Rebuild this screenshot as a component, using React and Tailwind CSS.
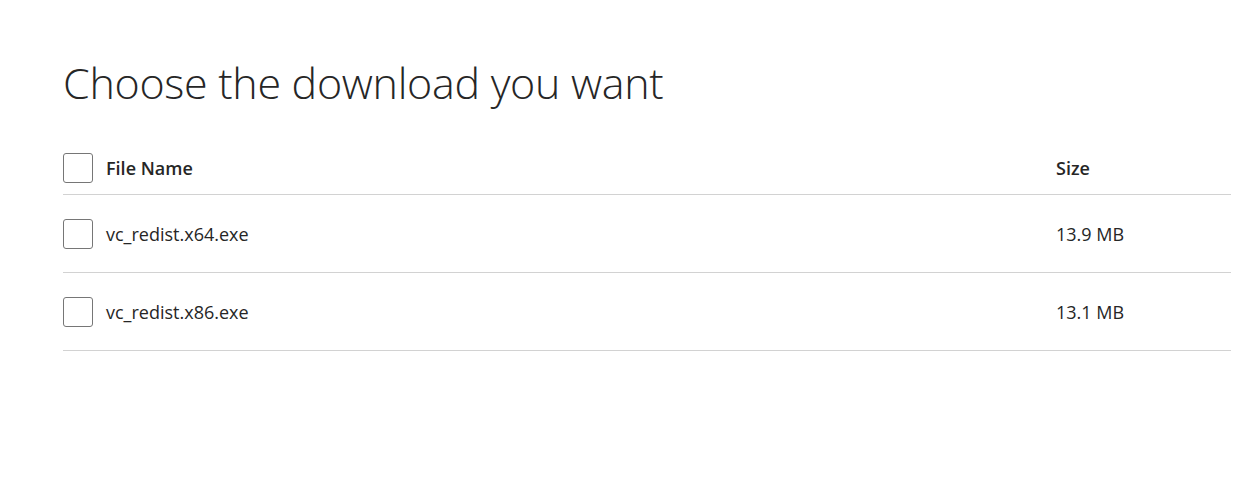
const files = [
  { name: "vc_redist.x64.exe", size: "13.9 MB" },
  { name: "vc_redist.x86.exe", size: "13.1 MB" },
];

function Box() {
  return <span className="block w-[30px] h-[30px] shrink-0 rounded-[3px] border-[1.5px] border-[#767676] bg-white" />;
}

export default function App() {
  return (
    <div className="min-h-screen bg-white pl-[63px] pr-[20px] pt-[53px] text-[#262626]" style={{ fontFamily: '"Segoe UI", "Open Sans", "Noto Sans", sans-serif' }}>
      <h1 className="text-[43px] leading-[60px] font-light tracking-[-0.3px] text-[#262626]">Choose the download you want</h1>

      <div className="mt-[40px] w-[1168px]">
        <div className="flex items-center border-b border-[#d2d2d2] pb-[11px]">
          <div className="flex items-center gap-[13px] flex-1">
            <Box />
            <span className="text-[18px] font-semibold">File Name</span>
          </div>
          <span className="w-[175px] text-[18px] font-semibold">Size</span>
        </div>
        {files.map((f) => (
          <div key={f.name} className="flex items-center border-b border-[#d2d2d2] pt-[24px] pb-[23px]">
            <div className="flex items-center gap-[13px] flex-1">
              <Box />
              <span className="text-[18px]">{f.name}</span>
            </div>
            <span className="w-[175px] text-[18px]">{f.size}</span>
          </div>
        ))}
      </div>
    </div>
  );
}
